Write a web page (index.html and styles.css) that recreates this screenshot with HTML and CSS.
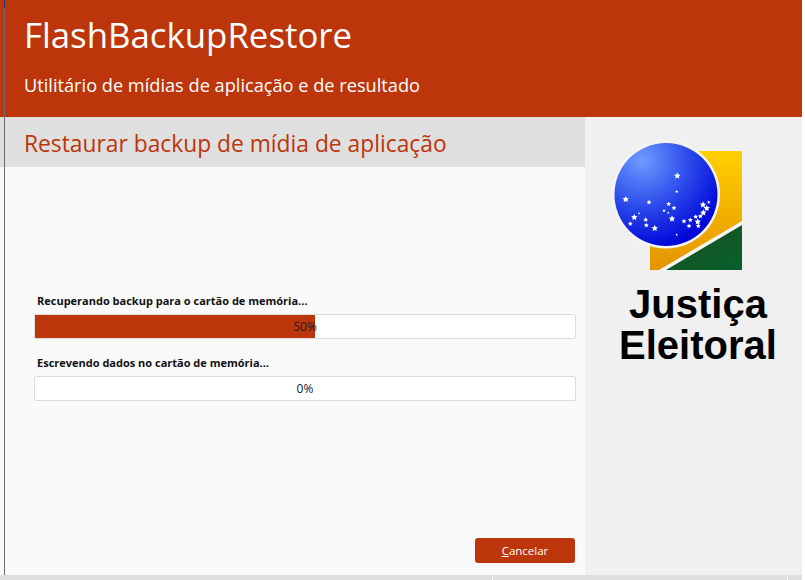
FILE: index.html
```html
<!DOCTYPE html>
<html lang="pt-BR">
<head>
<meta charset="utf-8"/>
<title>FlashBackupRestore</title>
<link rel="stylesheet" href="styles.css">
</head>
<body>
<div class="window">
  <header class="app-header">
    <h1>FlashBackupRestore</h1>
    <p>Utilitário de mídias de aplicação e de resultado</p>
  </header>
  <div class="app-body">
    <main class="main-pane">
      <h2 class="pane-title">Restaurar backup de mídia de aplicação</h2>
      <div class="progress-area">
        <div class="progress-label">Recuperando backup para o cartão de memória...</div>
        <div class="progress"><div class="progress-fill" style="width: 51.9%"></div><span>50%</span></div>
        <div class="progress-label">Escrevendo dados no cartão de memória...</div>
        <div class="progress"><span>0%</span></div>
      </div>
      <div class="actions">
        <button class="btn"><u>C</u>ancelar</button>
      </div>
    </main>
    <aside class="side-pane">
      <svg class="seal" width="130" height="130" viewBox="0 0 130 130">
        <defs>
          <linearGradient id="gold" x1="0" y1="0" x2="0" y2="1">
            <stop offset="0" stop-color="#ffd000"/>
            <stop offset="1" stop-color="#e59400"/>
          </linearGradient>
          <linearGradient id="green" x1="0" y1="0" x2="1" y2="1">
            <stop offset="0" stop-color="#1f4f1f"/>
            <stop offset="1" stop-color="#06602c"/>
          </linearGradient>
          <radialGradient id="globe" cx="0.27" cy="0.17" r="0.85">
            <stop offset="0" stop-color="#6e9bff"/>
            <stop offset="0.55" stop-color="#2a48ea"/>
            <stop offset="1" stop-color="#0007d8"/>
          </radialGradient>
          <polygon id="lg" points="0,-3.4 1,-1.3 3.2,-1 1.6,.5 2,2.7 0,1.7 -2,2.7 -1.6,.5 -3.2,-1 -1,-1.3"/>
          <polygon id="md" points="0,-2.5 .7,-1 2.4,-.8 1.2,.4 1.5,2 0,1.2 -1.5,2 -1.2,.4 -2.4,-.8 -.7,-1"/>
          <polygon id="sm" points="0,-1.8 .5,-.7 1.7,-.5 .8,.3 1,1.4 0,.9 -1,1.4 -.8,.3 -1.7,-.5 -.5,-.7"/>
          <circle id="xs" r="0.9"/>
        </defs>
        <rect x="38" y="11" width="92" height="119" fill="url(#gold)"/>
        <polygon points="130,81 130,130 47,130" fill="#f6f6f6"/>
        <polygon points="130,85 130,130 54,130" fill="url(#green)"/>
        <circle cx="54" cy="54.5" r="54" fill="#f3f3f3"/>
        <circle cx="54" cy="54.5" r="51.5" fill="url(#globe)"/>
        <g fill="#fff">
          <use href="#lg" x="65.3" y="35.7"/>
          <use href="#sm" x="64.7" y="51.7"/>
          <use href="#lg" x="13.7" y="59.3"/>
          <use href="#md" x="37" y="62.3"/>
          <use href="#md" x="56.7" y="64"/>
          <use href="#md" x="62" y="68"/>
          <use href="#sm" x="52" y="70.7"/>
          <use href="#xs" x="56.3" y="72.7"/>
          <use href="#lg" x="60" y="78.7"/>
          <use href="#xs" x="27" y="73.3"/>
          <use href="#lg" x="22.3" y="77.3"/>
          <use href="#md" x="33.7" y="79.7"/>
          <use href="#md" x="34.3" y="85.3"/>
          <use href="#md" x="18.3" y="83.7"/>
          <use href="#lg" x="42.7" y="88.3"/>
          <use href="#xs" x="64.7" y="94.7"/>
          <use href="#md" x="72" y="81.3"/>
          <use href="#md" x="78.3" y="80"/>
          <use href="#md" x="83.7" y="76.7"/>
          <use href="#md" x="88.3" y="76.3"/>
          <use href="#lg" x="85.7" y="81.7"/>
          <use href="#md" x="77" y="86"/>
          <use href="#md" x="86.3" y="86"/>
          <use href="#lg" x="91.3" y="72.7"/>
          <use href="#lg" x="94.7" y="68.3"/>
          <use href="#lg" x="91" y="64.7"/>
          <use href="#sm" x="96.7" y="62.3"/>
        </g>
      </svg>
      <div class="seal-text">Justiça<br>Eleitoral</div>
    </aside>
  </div>
  <div class="status-strip"></div>
</div>
</body>
</html>
```
FILE: styles.css
```css
* { box-sizing: border-box; }
html, body { margin: 0; height: 100%; background: #fff; }
body { font-family: "Open Sans", "Noto Sans", sans-serif; overflow: hidden; }
.window { position: relative; width: 802px; height: 580px; display: flex; flex-direction: column; background: #dfdfdf; }
/* borda escura da janela de tras */
.window::before { content: ""; position: absolute; left: 4px; top: 0; bottom: 0; width: 1px; background: linear-gradient(#1c3a6a 8px, #6c6c6c 8px); }
.app-header { height: 117px; flex-shrink: 0; background: #bd350a; color: #fff; padding: 12px 0 0 24px; }
.app-header h1 { margin: 0; font-size: 34.8px; font-weight: 400; line-height: 46px; }
.app-header p { margin: 14px 0 0; font-size: 18.2px; line-height: 26px; }
.app-body { height: 458px; flex-shrink: 0; display: flex; }
.main-pane { width: 585px; background: #fafafa; display: flex; flex-direction: column; }
.pane-title { margin: 0; height: 50px; background: #dfdfdf; color: #bd350a; font-size: 22.8px; font-weight: 400; line-height: 53px; padding-left: 24px; }
.progress-area { flex: 1; padding: 126px 9px 0 34px; }
.progress-label { font-size: 11px; font-weight: 700; color: #111; line-height: 16px; padding-left: 3px; margin-bottom: 5px; }
.progress { position: relative; height: 25px; background: #fff; border: 1px solid #dcdcdc; border-radius: 2px; margin-bottom: 16px; text-align: center; font-size: 12px; line-height: 23px; color: #222; }
.progress span { position: relative; }
.progress-fill { position: absolute; left: 0; top: 0; bottom: 0; background: #bd350a; }
.actions { display: flex; justify-content: flex-end; padding: 0 10px 12px 0; }
.btn { width: 100px; height: 25px; background: #bd350a; color: #fff; border: 0; border-radius: 3px; font-family: inherit; font-size: 11.5px; padding: 0; }
.side-pane { flex: 1; background: #f0f0f0; display: flex; flex-direction: column; align-items: center; padding: 23px 0 0 9px; }
.seal { display: block; margin-right: 42px; }
.seal-text { font-family: "Liberation Sans", Arial, sans-serif; font-weight: 700; font-size: 40px; line-height: 41px; color: #000; text-align: center; margin-top: 14px; }
.status-strip { flex: 1; background: #dfdfdf; position: relative; }
.status-strip::before, .status-strip::after { content: ""; position: absolute; top: 2px; bottom: 0; width: 1px; background: #fff; }
.status-strip::before { left: 492px; }
.status-strip::after { left: 787px; }
```
